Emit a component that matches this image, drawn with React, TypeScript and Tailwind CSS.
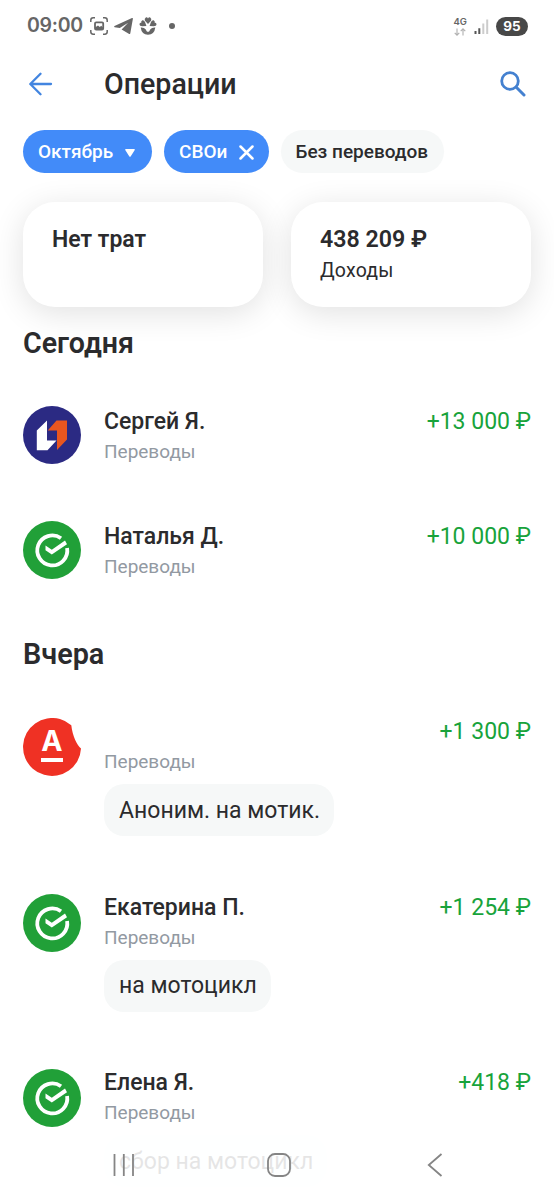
import React from 'react';
import clsx from 'clsx';

type Bank = 'psb' | 'sber' | 'alfa';

interface Operation {
  id: number;
  bank: Bank;
  name: string;
  amount: string;
  message?: string;
}

const today: Operation[] = [
  { id: 1, bank: 'psb', name: 'Сергей Я.', amount: '+13 000 ₽' },
  { id: 2, bank: 'sber', name: 'Наталья Д.', amount: '+10 000 ₽' },
];

const yesterday: Operation[] = [
  { id: 3, bank: 'alfa', name: '', amount: '+1 300 ₽', message: 'Аноним. на мотик.' },
  { id: 4, bank: 'sber', name: 'Екатерина П.', amount: '+1 254 ₽', message: 'на мотоцикл' },
  { id: 5, bank: 'sber', name: 'Елена Я.', amount: '+418 ₽', message: 'сбор на мотоцикл' },
];

const PsbLogo = () => (
  <svg viewBox="0 0 58 58" className="h-[58px] w-[58px]">
    <circle cx="29" cy="29" r="29" fill="#2b2a83" />
    <path d="M13.8 24.5 L24 14.5 V34.5 H33.5 L24.5 44.3 H13.8 Z" fill="#fff" />
    <path d="M33.5 14.5 H44 V33.5 L34 44 V24.5 H24.7 Z" fill="#e9561f" />
  </svg>
);

const SberLogo = () => (
  <svg viewBox="0 0 58 58" className="h-[58px] w-[58px]">
    <circle cx="29" cy="29" r="29" fill="#21a038" />
    <path d="M38 17.2 A15 15 0 1 0 44.1 27" fill="none" stroke="#fff" strokeWidth="3.8" />
    <path d="M22.5 24.5 L28.8 28.7 L42 19.4 L44 23.2 L28.8 33.6 L22.5 29.3 Z" fill="#fff" />
  </svg>
);

const AlfaLogo = () => (
  <div className="relative flex h-[58px] w-[58px] flex-col items-center">
    <svg viewBox="0 0 58 58" className="absolute inset-0 h-[58px] w-[58px]">
      <path d="M48.3 7.3 A29 29 0 1 0 58 30.5 C54 27.5 49.5 18 48.3 7.3 Z" fill="#ef3124" />
    </svg>
    <span className="relative mt-[8px] font-['Inter',sans-serif] text-[28.5px] leading-[30px] font-bold text-white">А</span>
    <span className="relative mt-[2px] h-[4px] w-[22px] bg-white" />
  </div>
);

const BankLogo = ({ bank }: { bank: Bank }) => {
  if (bank === 'psb') return <PsbLogo />;
  if (bank === 'alfa') return <AlfaLogo />;
  return <SberLogo />;
};

const StatusBar = () => (
  <div className="flex h-[52px] items-center pr-[26px] pl-[27px] text-[#666]">
    <span className="w-[55px] font-['Inter',sans-serif] text-[19.5px] font-semibold tracking-[-0.3px]">09:00</span>
    <svg viewBox="0 0 18 18" className="ml-[8px] h-[18px] w-[18px]" fill="none" stroke="currentColor" strokeWidth="1.5">
      <path d="M.8 5V3.2Q.8.8 3.2.8H5 M13 .8h1.8q2.4 0 2.4 2.4V5 M17.2 13v1.8q0 2.4-2.4 2.4H13 M5 17.2H3.2q-2.4 0-2.4-2.4V13" />
      <rect x="5" y="5.3" width="8.2" height="7.4" rx="1.2" strokeWidth="1.8" />
      <path d="M5 12.5 V10.5 L8 8.6 L9.8 10 L11.2 8.8 L13 10.5 V12.5 Z" fill="currentColor" stroke="none" />
    </svg>
    <svg viewBox="0 0 20 18" className="ml-[6px] h-[18px] w-5" fill="currentColor">
      <path d="M.5 9 L18 1 Q19 .7 18.9 1.8 L16.3 16.2 Q16 17.6 14.8 16.8 L7.6 12.6 L14.2 5.8 L5.8 11 L.6 10.2 Q-.3 9.7 .5 9 Z" />
    </svg>
    <svg viewBox="0 0 18 18" className="ml-[5px] h-[18px] w-[18px]" fill="currentColor">
      <path d="M9 6.9 L6 3.8 Q5 1.8 6.8.5 Q8.2 0 9 1.4 Q9.8 0 11.2.5 Q13 1.8 12 3.8 Z" />
      <path d="M7.4 8.9 L3.4 9.3 Q.5 9.2.5 7 Q.8 5.5 2.3 5.7 Q1.8 3.9 3.4 3.2 Q5.4 3.1 6.2 5.5 Z" />
      <path d="M10.6 8.9 L14.6 9.3 Q17.5 9.2 17.5 7 Q17.2 5.5 15.7 5.7 Q16.2 3.9 14.6 3.2 Q12.6 3.1 11.8 5.5 Z" />
      <path d="M1.7 10.4 Q5.3 10.2 6.8 12.4 Q7.4 14.6 9 15 Q10.6 14.6 11.2 12.4 Q12.7 10.2 16.3 10.4 Q15.4 17.5 9 17.7 Q2.6 17.5 1.7 10.4 Z" />
    </svg>
    <span className="ml-[12px] h-1.5 w-1.5 rounded-full bg-[#666]" />

    <div className="ml-auto flex items-center">
      <div className="flex flex-col items-center">
        <span className="font-['Inter',sans-serif] text-[9.5px] leading-[10px] font-semibold">4G</span>
        <svg viewBox="0 0 12 8" className="mt-px h-2 w-3" fill="none" stroke="#b0b0b0" strokeWidth="1.1">
          <path d="M3 .5V7 M.7 4.8 L3 7.1 L5.3 4.8 M9 7.5V1 M6.7 3.2 L9 .9 L11.3 3.2" />
        </svg>
      </div>
      <svg viewBox="0 0 15 15" className="ml-[7px] h-[15px] w-[15px]">
        <path d="M.5 12h2v3h-2z M4.3 9.3h2V15h-2z" fill="#555" />
        <path d="M8.3 4.5h2V15h-2z M12.2.5h2V15h-2z" fill="#ccc" />
      </svg>
      <div className="ml-[7px] flex h-[19px] w-8 items-center justify-center rounded-full bg-[#484848] font-['Inter',sans-serif] text-[13.5px] font-bold text-white">
        95
      </div>
    </div>
  </div>
);

const Header = () => (
  <header className="flex h-[64px] items-center pr-7 pl-[29px]">
    <svg viewBox="0 0 24 24" className="h-6 w-6" fill="none" stroke="#4285e0" strokeWidth="2.3" strokeLinecap="round" strokeLinejoin="round">
      <path d="M22 12H1.5 M11.5 1.8 L1.3 12 L11.5 22.2" />
    </svg>
    <h1 className="ml-[51px] text-[28.6px] leading-8 font-medium">Операции</h1>
    <svg viewBox="0 0 26 26" className="ml-auto h-[26px] w-[26px]" fill="none" stroke="#4481d0" strokeLinecap="round">
      <circle cx="10" cy="10" r="8.3" strokeWidth="2.8" />
      <path d="M16.3 16.3 L24 24" strokeWidth="3" />
    </svg>
  </header>
);

const Filters = () => (
  <div className="mt-[14px] flex gap-3 px-[23px] text-[19px] font-medium">
    <button className="flex h-[43px] w-[129px] items-center rounded-full bg-[#428bf9] pt-px pl-[15px] text-white">
      Октябрь
      <svg viewBox="0 0 10 8" className="mt-0.5 ml-3 h-2 w-2.5" fill="#fff">
        <path d="M.9 0 H9.1 Q10.3.2 9.6 1.3 L5.8 7.3 Q5 8.3 4.2 7.3 L.4 1.3 Q-.3.2.9 0 Z" />
      </svg>
    </button>
    <button className="flex h-[43px] w-[105px] items-center rounded-full bg-[#428bf9] pt-px pl-[15px] text-white">
      СВОи
      <svg viewBox="0 0 15 15" className="ml-[12px] h-[15px] w-[15px]" stroke="#fff" strokeWidth="2.5" strokeLinecap="round">
        <path d="M1.5 1.5 L13.5 13.5 M13.5 1.5 L1.5 13.5" />
      </svg>
    </button>
    <button className="flex h-[43px] w-[163px] items-center rounded-full bg-[#f6f8f8] pt-px pl-[14.5px]">
      Без переводов
    </button>
  </div>
);

const Summary = () => (
  <div className="mt-[29px] grid grid-cols-2 gap-[28px] px-[23px]">
    <div className="h-[105px] rounded-[32px] bg-white px-[29px] pt-[22px] shadow-[0_6px_32px_rgba(0,0,0,0.12)]">
      <p className="text-[23px] leading-[31px] font-semibold">Нет трат</p>
    </div>
    <div className="h-[105px] rounded-[32px] bg-white px-[29px] pt-[22px] shadow-[0_6px_32px_rgba(0,0,0,0.12)]">
      <p className="text-[23.2px] leading-[31px] font-semibold">438 209 ₽</p>
      <p className="text-[19.5px] leading-[31px] tracking-[0.2px]">Доходы</p>
    </div>
  </div>
);

const OperationRow = ({ operation }: { operation: Operation }) => {
  const { bank, name, amount, message } = operation;

  return (
    <div className="flex px-[23px]">
      <div className={clsx('shrink-0', message && 'pt-px')}>
        <BankLogo bank={bank} />
      </div>
      <div className={clsx('ml-[23px] min-w-0 flex-1', !message && 'pt-px')}>
        <div className="flex h-[30px] items-center justify-between text-[23px] leading-[30px]">
          <span className="font-medium">{name}</span>
          <span className="text-[#18a33b]">{amount}</span>
        </div>
        <p className="text-[19px] leading-[30px] text-[#9299a2]">Переводы</p>
        {message && (
          <div className="mt-[7px] flex h-[52px] w-fit items-center rounded-[20px] bg-[#f6f8f8] pt-0.5 pr-[14px] pl-[15px] text-[23px]">
            {message}
          </div>
        )}
      </div>
    </div>
  );
};

const NavigationBar = () => (
  <nav className="absolute inset-x-0 bottom-0 flex h-[70px] items-center bg-white/88 pl-[113px]">
    <svg viewBox="0 0 22 24" className="h-6 w-[22px]" stroke="#858585" strokeWidth="1.8">
      <path d="M1.5 1V23 M10.8 1V23 M20 1V23" />
    </svg>
    <svg viewBox="0 0 24 24" className="ml-[132px] h-6 w-6" fill="none" stroke="#858585" strokeWidth="1.8">
      <rect x="1" y="1" width="22" height="22" rx="7" />
    </svg>
    <svg viewBox="0 0 16 24" className="ml-[136px] h-6 w-4" fill="none" stroke="#858585" strokeWidth="1.8">
      <path d="M14.5 1 L1.8 12 L14.5 23" />
    </svg>
  </nav>
);

const App = () => {
  return (
    <div className="relative h-[1200px] w-[554px] overflow-hidden bg-white font-['Roboto','Noto_Sans',sans-serif] text-[#2b2b2d]">
      <StatusBar />
      <Header />
      <Filters />
      <Summary />

      <section>
        <h2 className="mt-[20px] px-[23px] text-[28.6px] leading-8 font-semibold">Сегодня</h2>
        <div className="mt-[47px] flex flex-col gap-[54px]">
          {today.map((operation) => (
            <OperationRow key={operation.id} operation={operation} />
          ))}
        </div>
      </section>

      <section>
        <h2 className="mt-[56px] px-[23px] text-[28.8px] leading-8 font-semibold">Вчера</h2>
        <div className="mt-[47px] flex flex-col gap-[56.5px]">
          {yesterday.map((operation) => (
            <OperationRow key={operation.id} operation={operation} />
          ))}
        </div>
      </section>

      <NavigationBar />
    </div>
  );
};

export default App;
